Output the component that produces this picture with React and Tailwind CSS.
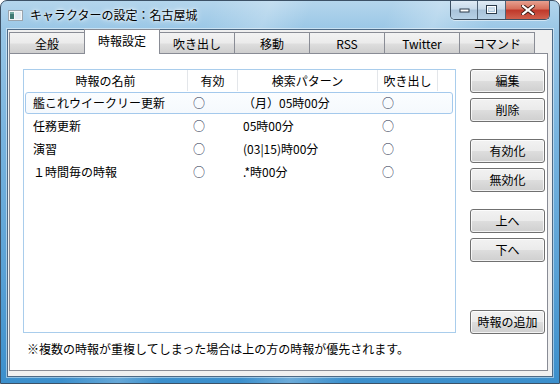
import React from 'react'

const tabs = ['全般', '時報設定', '吹き出し', '移動', 'RSS', 'Twitter', 'コマンド']

const rows = [
  { name: '艦これウイークリー更新', on: '○', pattern: '（月）05時00分', balloon: '○', selected: true },
  { name: '任務更新', on: '○', pattern: '05時00分', balloon: '○' },
  { name: '演習', on: '○', pattern: '(03|15)時00分', balloon: '○' },
  { name: '１時間毎の時報', on: '○', pattern: '.*時00分', balloon: '○' },
]

function Btn({ children, className = '' }) {
  return (
    <div
      className={`h-[24px] w-[75px] flex items-center justify-center rounded-[3px] border border-[#707070] bg-[linear-gradient(180deg,#f2f2f2_0%,#ebebeb_48%,#dddddd_52%,#cfcfcf_100%)] shadow-[inset_0_0_0_1px_rgba(255,255,255,0.75)] text-[12px] leading-none text-black ${className}`}
    >
      {children}
    </div>
  )
}

function TitleIcon() {
  return (
    <svg width="15" height="11" viewBox="0 0 15 11">
      <rect x="0.5" y="0.5" width="14" height="10" fill="#f4f6f8" stroke="#9aa4ad" />
      <rect x="2" y="2" width="4" height="7" fill="#3f7a74" />
      <rect x="7" y="2" width="6" height="7" fill="#dfeaf2" />
      <rect x="2" y="2" width="4" height="2" fill="#6fa7a0" />
    </svg>
  )
}

function CaptionButtons() {
  return (
    <div className="-mt-px flex h-[20px] rounded-b-[5px] border border-t-0 border-[#3d4f61] overflow-hidden shadow-[0_1px_0_rgba(255,255,255,0.5)]">
      <div className="w-[27px] flex items-center justify-center bg-[linear-gradient(180deg,#e3edf6_0%,#c9dbea_45%,#a9c3da_55%,#b7d1e6_100%)] border-r border-[#4f6275]">
        <svg width="11" height="6" viewBox="0 0 11 6">
          <rect x="1" y="2" width="9" height="3" fill="#fff" stroke="#2c3b4a" strokeWidth="1" />
        </svg>
      </div>
      <div className="w-[28px] flex items-center justify-center bg-[linear-gradient(180deg,#e3edf6_0%,#c9dbea_45%,#a9c3da_55%,#b7d1e6_100%)] border-r border-[#4f6275]">
        <svg width="11" height="9" viewBox="0 0 11 9">
          <rect x="1" y="1" width="9" height="7" fill="none" stroke="#2c3b4a" strokeWidth="2" />
          <rect x="1.5" y="1.5" width="8" height="6" fill="none" stroke="#fff" strokeWidth="1" />
          <rect x="3" y="4" width="5" height="2" fill="#dbe6ef" />
        </svg>
      </div>
      <div className="w-[43px] flex items-center justify-center bg-[linear-gradient(180deg,#e8a696_0%,#d7715d_45%,#c0392b_55%,#d0614e_100%)]">
        <svg width="14" height="10" viewBox="0 0 14 10">
          <path d="M2 1 L12 9 M12 1 L2 9" stroke="#3a1a14" strokeWidth="4" strokeLinecap="square" />
          <path d="M2 1 L12 9 M12 1 L2 9" stroke="#fff" strokeWidth="2.2" strokeLinecap="square" />
        </svg>
      </div>
    </div>
  )
}

export default function App() {
  return (
    <div className="w-[560px] h-[384px] flex flex-col rounded-t-[7px] border border-[#3c5166] bg-[linear-gradient(112deg,transparent_30%,rgba(255,255,255,0.22)_38%,transparent_44%,transparent_55%,rgba(255,255,255,0.25)_62%,transparent_70%),linear-gradient(180deg,#b4d5ec_0%,#98c6e6_8%,#78b4df_35%,#5aa2d6_70%,#3b8fcc_100%)] font-['Noto_Sans_CJK_JP',sans-serif] text-[12px] text-black overflow-hidden">
      {/* Title bar */}
      <div className="h-[28px] flex items-start shrink-0">
        <div className="ml-[7px] mt-[9px]">
          <TitleIcon />
        </div>
        <div className="ml-[7px] mt-[6px] text-[12px] leading-[16px] [text-shadow:0_0_6px_#ffffff,0_0_3px_#ffffff]">
          キャラクターの設定：名古屋城
        </div>
        <div className="flex-1" />
        <div className="mr-[9px]">
          <CaptionButtons />
        </div>
      </div>

      {/* Client area */}
      <div className="mx-[6px] h-[348px] shrink-0 border border-[#4d6a86] bg-[#f0f0f0] shadow-[0_0_0_1px_rgba(255,255,255,0.45)]">
        <div className="h-full flex flex-col pl-[1px] pr-[4px] pb-[5px]">
          {/* Tabs */}
          <div className="h-[24px] flex items-end shrink-0">
            {tabs.map((t, i) =>
              t === '時報設定' ? (
                <div
                  key={t}
                  className="relative z-10 -ml-px h-[25px] w-[76px] flex items-center justify-center border border-b-0 border-[#898c95] bg-white leading-none pb-[2px]"
                >
                  {t}
                </div>
              ) : (
                <div
                  key={t}
                  className={`h-[22px] w-[76px] flex items-center justify-center border border-b-0 border-[#898c95] bg-[linear-gradient(180deg,#f3f3f3_0%,#ebebeb_48%,#dedede_52%,#cdcdcd_100%)] leading-none ${i === 0 ? '' : '-ml-px'}`}
                >
                  {t}
                </div>
              )
            )}
          </div>

          {/* Tab page */}
          <div className="-mt-px flex-1 border border-[#898c95] bg-white flex flex-col pl-[13px] pt-[15px]">
            <div className="flex">
              {/* List view */}
              <div className="w-[433px] h-[264px] border border-[#a9cdec] bg-white flex flex-col">
                <div className="h-[21px] flex shrink-0">
                  <div className="w-[164px] flex items-center justify-center border-r border-[#e3e6ea]">時報の名前</div>
                  <div className="w-[50px] flex items-center justify-center border-r border-[#e3e6ea]">有効</div>
                  <div className="w-[140px] flex items-center justify-center border-r border-[#e3e6ea]">検索パターン</div>
                  <div className="w-[60px] flex items-center justify-center border-r border-[#e3e6ea]">吹き出し</div>
                  <div className="flex-1" />
                </div>
                <div className="pt-[1px] flex flex-col">
                  {rows.map((r) => (
                    <div key={r.name} className="h-[23px] pl-[1px] pr-[2px]">
                      <div
                        className={`h-[22px] flex items-center rounded-[3px] border leading-none ${r.selected ? 'border-[#a4c9ec] bg-[linear-gradient(180deg,#fbfdff,#f5f9fd)]' : 'border-transparent'}`}
                      >
                        <div className="w-[161px] pl-[7px] whitespace-nowrap">{r.name}</div>
                        <div className="w-[50px] pl-[6px] text-[#1b2a4a]">{r.on}</div>
                        <div className="w-[140px] pl-[6px] whitespace-nowrap">{r.pattern}</div>
                        <div className="w-[60px] pl-[5px] text-[#1b2a4a]">{r.balloon}</div>
                      </div>
                    </div>
                  ))}
                </div>
              </div>

              {/* Buttons */}
              <div className="ml-[14px] h-[265px] flex flex-col">
                <Btn>編集</Btn>
                <Btn className="mt-[5px]">削除</Btn>
                <Btn className="mt-[17px]">有効化</Btn>
                <Btn className="mt-[5px]">無効化</Btn>
                <Btn className="mt-[17px]">上へ</Btn>
                <Btn className="mt-[5px]">下へ</Btn>
                <Btn className="mt-auto">時報の追加</Btn>
              </div>
            </div>

            <div className="mt-[7px] pl-[4px] leading-[16px] whitespace-nowrap">
              ※複数の時報が重複してしまった場合は上の方の時報が優先されます。
            </div>
          </div>
        </div>
      </div>
    </div>
  )
}
